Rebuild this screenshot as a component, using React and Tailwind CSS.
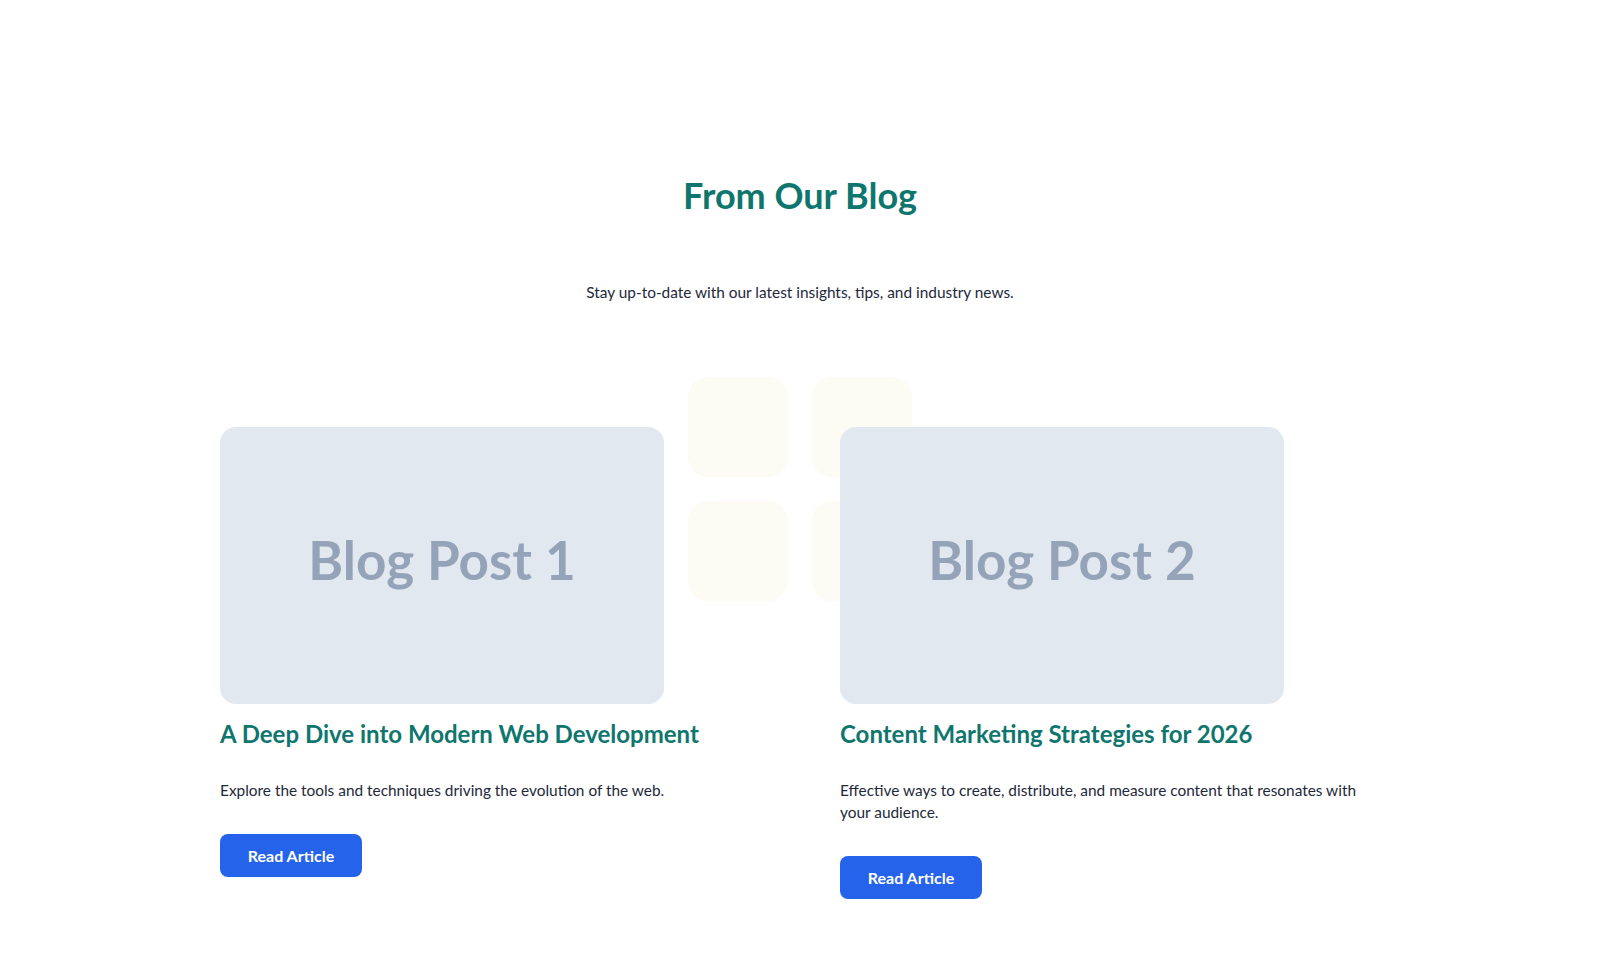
const posts = [
  {
    id: 1,
    label: "Blog Post 1",
    title: "A Deep Dive into Modern Web Development",
    excerpt: "Explore the tools and techniques driving the evolution of the web.",
  },
  {
    id: 2,
    label: "Blog Post 2",
    title: "Content Marketing Strategies for 2026",
    excerpt:
      "Effective ways to create, distribute, and measure content that resonates with your audience.",
  },
];

export default function App() {
  return (
    <div
      className="min-h-screen bg-white text-[#1e293b]"
      style={{ fontFamily: "Lato, 'Open Sans', sans-serif" }}
    >
      <section className="pt-[175px] pb-24">
        <div className="max-w-[1200px] mx-auto px-5">
          {/* Header */}
          <h2 className="text-center text-4xl leading-10 font-bold text-[#0f766e]">
            From Our Blog
          </h2>
          <p className="mt-[65px] text-center text-[15.4px] leading-6">
            Stay up-to-date with our latest insights, tips, and industry news.
          </p>

          {/* Posts */}
          <div className="relative mt-[123px] grid grid-cols-2 gap-x-20">
            {/* faint tile pattern behind the cards */}
            <div className="absolute left-1/2 -translate-x-1/2 -top-[50px] grid grid-cols-2 gap-6">
              <div className="w-[100px] h-[100px] rounded-[20px] bg-[#fcfbf4]"></div>
              <div className="w-[100px] h-[100px] rounded-[20px] bg-[#fcfbf4]"></div>
              <div className="w-[100px] h-[100px] rounded-[20px] bg-[#fcfbf4]"></div>
              <div className="w-[100px] h-[100px] rounded-[20px] bg-[#fcfbf4]"></div>
            </div>

            {posts.map((post) => (
              <article key={post.id} className="relative">
                <div className="w-[444px] h-[277px] pb-3 rounded-2xl bg-[#e2e8f0] flex items-center justify-center">
                  <span className="text-[53px] font-bold text-[#94a3b8]">
                    {post.label}
                  </span>
                </div>
                <h3 className="mt-[14px] text-2xl leading-8 font-bold text-[#0f766e]">
                  {post.title}
                </h3>
                <p className="mt-[29px] max-w-[530px] text-[15.4px] leading-[22px]">
                  {post.excerpt}
                </p>
                <a
                  href="#"
                  className="mt-[33px] inline-flex items-center justify-center w-[142px] h-[43px] rounded-lg bg-[#2563eb] text-white text-base font-bold"
                >
                  Read Article
                </a>
              </article>
            ))}
          </div>
        </div>
      </section>
    </div>
  );
}
